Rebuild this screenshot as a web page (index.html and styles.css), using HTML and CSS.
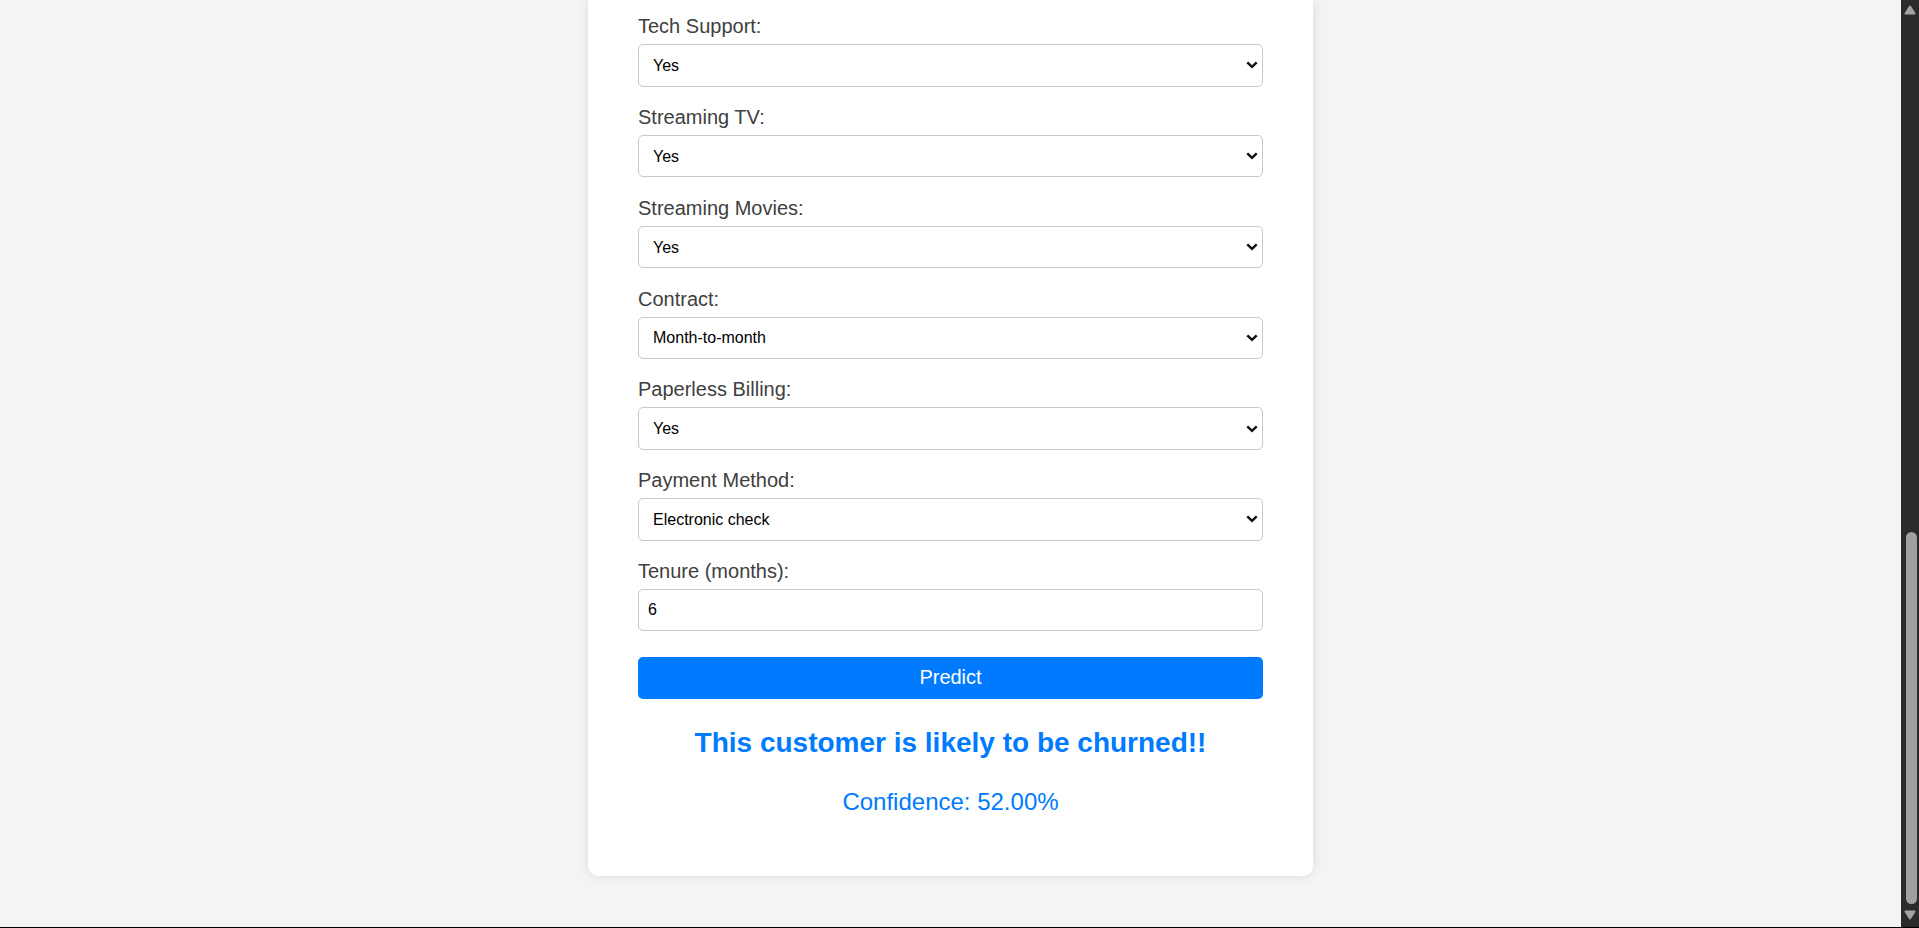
FILE: index.html
```
<!DOCTYPE html>
<html lang="en">
<head>
<meta charset="utf-8">
<title>Customer Churn Prediction</title>
<link rel="stylesheet" href="styles.css">
</head>
<body>
<div class="screen">
  <div class="viewport">
    <main class="page">
      <section class="card">
        <form class="form">
          <div class="field">
            <label class="label" for="tech">Tech Support:</label>
            <div class="select-wrap">
              <select class="control select" id="tech">
                <option selected>Yes</option>
                <option>No</option>
                <option>No internet service</option>
              </select>
              <svg class="chev" width="12" height="8" viewBox="0 0 12 8"><path d="M1.3 1.3 L6 5.9 L10.7 1.3" fill="none" stroke="#111" stroke-width="2.4"/></svg>
            </div>
          </div>
          <div class="field">
            <label class="label" for="tv">Streaming TV:</label>
            <div class="select-wrap">
              <select class="control select" id="tv">
                <option selected>Yes</option>
                <option>No</option>
                <option>No internet service</option>
              </select>
              <svg class="chev" width="12" height="8" viewBox="0 0 12 8"><path d="M1.3 1.3 L6 5.9 L10.7 1.3" fill="none" stroke="#111" stroke-width="2.4"/></svg>
            </div>
          </div>
          <div class="field">
            <label class="label" for="movies">Streaming Movies:</label>
            <div class="select-wrap">
              <select class="control select" id="movies">
                <option selected>Yes</option>
                <option>No</option>
                <option>No internet service</option>
              </select>
              <svg class="chev" width="12" height="8" viewBox="0 0 12 8"><path d="M1.3 1.3 L6 5.9 L10.7 1.3" fill="none" stroke="#111" stroke-width="2.4"/></svg>
            </div>
          </div>
          <div class="field">
            <label class="label" for="contract">Contract:</label>
            <div class="select-wrap">
              <select class="control select" id="contract">
                <option selected>Month-to-month</option>
                <option>One year</option>
                <option>Two year</option>
              </select>
              <svg class="chev" width="12" height="8" viewBox="0 0 12 8"><path d="M1.3 1.3 L6 5.9 L10.7 1.3" fill="none" stroke="#111" stroke-width="2.4"/></svg>
            </div>
          </div>
          <div class="field">
            <label class="label" for="paperless">Paperless Billing:</label>
            <div class="select-wrap">
              <select class="control select" id="paperless">
                <option selected>Yes</option>
                <option>No</option>
              </select>
              <svg class="chev" width="12" height="8" viewBox="0 0 12 8"><path d="M1.3 1.3 L6 5.9 L10.7 1.3" fill="none" stroke="#111" stroke-width="2.4"/></svg>
            </div>
          </div>
          <div class="field">
            <label class="label" for="payment">Payment Method:</label>
            <div class="select-wrap">
              <select class="control select" id="payment">
                <option selected>Electronic check</option>
                <option>Mailed check</option>
                <option>Bank transfer (automatic)</option>
                <option>Credit card (automatic)</option>
              </select>
              <svg class="chev" width="12" height="8" viewBox="0 0 12 8"><path d="M1.3 1.3 L6 5.9 L10.7 1.3" fill="none" stroke="#111" stroke-width="2.4"/></svg>
            </div>
          </div>
          <div class="field field-last">
            <label class="label" for="tenure">Tenure (months):</label>
            <input class="control input" id="tenure" type="text" value="6">
          </div>
          <button class="btn" type="button">Predict</button>
        </form>
        <h2 class="result">This customer is likely to be churned!!</h2>
        <p class="confidence">Confidence: 52.00%</p>
      </section>
    </main>
    <div class="scrollbar">
      <div class="sb-arrow sb-up">
        <svg width="12" height="10" viewBox="0 0 12 10"><polygon points="6,1.5 10.5,8.5 1.5,8.5" fill="#a3a3a3" stroke="#a3a3a3" stroke-width="2" stroke-linejoin="round"/></svg>
      </div>
      <div class="sb-track"></div>
      <div class="sb-thumb"></div>
      <div class="sb-arrow sb-down">
        <svg width="12" height="10" viewBox="0 0 12 10"><polygon points="1.5,1.5 10.5,1.5 6,8.5" fill="#a3a3a3" stroke="#a3a3a3" stroke-width="2" stroke-linejoin="round"/></svg>
      </div>
    </div>
  </div>
  <div class="bottom-line"></div>
</div>
</body>
</html>
```

FILE: styles.css
```
* {
  box-sizing: border-box;
}

html, body {
  margin: 0;
  padding: 0;
  height: 928px;
  overflow: hidden;
}

body {
  font-family: "Liberation Sans", Arial, sans-serif;
  background: #f4f4f4;
}

.screen {
  display: flex;
  flex-direction: column;
  height: 928px;
}

.viewport {
  flex: 1;
  display: flex;
  min-height: 0;
}

.page {
  flex: 1;
  display: flex;
  justify-content: center;
  align-items: flex-start;
  background: #f4f4f4;
  overflow: hidden;
}

.card {
  width: 725px;
  background: #ffffff;
  border-radius: 0 0 10px 10px;
  box-shadow: 0 0 12px rgba(0, 0, 0, 0.1);
  padding: 15.2px 50px 60.4px;
}

.form {
  display: flex;
  flex-direction: column;
}

.field {
  display: flex;
  flex-direction: column;
  margin-bottom: 19.3px;
}

.field-last {
  margin-bottom: 25.2px;
}

.label {
  display: block;
  font-size: 20px;
  line-height: 23px;
  color: #404040;
  margin-bottom: 6.1px;
}

.select-wrap {
  display: grid;
}

.select-wrap > * {
  grid-area: 1 / 1;
}

.control {
  width: 100%;
  height: 42.4px;
  font-family: "Liberation Sans", Arial, sans-serif;
  font-size: 16px;
  color: #000000;
  background: #ffffff;
  border: 1px solid #c8c8c8;
  border-radius: 5px;
  margin: 0;
  outline: none;
}

.select {
  appearance: none;
  -webkit-appearance: none;
  padding: 0 30px 0 14px;
}

.input {
  padding: 0 9px;
}

.chev {
  justify-self: end;
  align-self: center;
  margin-right: 5px;
  pointer-events: none;
}

.btn {
  width: 100%;
  height: 42.4px;
  background: #007bff;
  color: #ffffff;
  border: none;
  border-radius: 5px;
  font-family: "Liberation Sans", Arial, sans-serif;
  font-size: 20px;
  padding: 0;
  margin: 0;
}

.result {
  margin: 27.9px 0 0;
  text-align: center;
  color: #007bff;
  font-size: 28px;
  line-height: 32px;
  font-weight: bold;
}

.confidence {
  margin: 29.6px 0 0;
  text-align: center;
  color: #007bff;
  font-size: 24px;
  line-height: 27.6px;
}

.scrollbar {
  width: 18px;
  flex: 0 0 18px;
  background: #2b2b2b;
  display: flex;
  flex-direction: column;
  align-items: center;
}

.sb-arrow {
  display: flex;
  justify-content: center;
}

.sb-up {
  height: 18px;
  padding-top: 5px;
}

.sb-track {
  flex: 1;
}

.sb-thumb {
  width: 11px;
  height: 372px;
  background: #a0a0a0;
  border-radius: 6px;
  margin-left: 3px;
}

.sb-down {
  height: 23px;
  padding-top: 6px;
}

.bottom-line {
  height: 1px;
  background: #000000;
}
```
